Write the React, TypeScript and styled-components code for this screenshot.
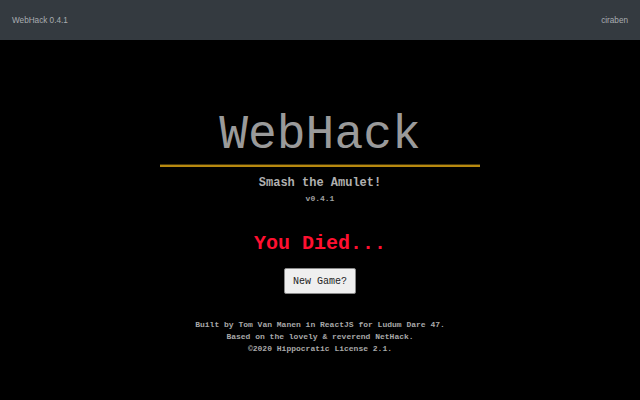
import React from "react";
import styled, { createGlobalStyle } from "styled-components";

const Global = createGlobalStyle`
  html, body { margin: 0; padding: 0; background: #000; }
  body { font-family: "Liberation Mono", "Courier New", monospace; }
`;

const Page = styled.div`
  width: 640px;
  height: 400px;
  background: #000;
  display: flex;
  flex-direction: column;
  overflow: hidden;
`;

const NavBar = styled.header`
  height: 40px;
  background: #343a40;
  display: flex;
  align-items: center;
  justify-content: space-between;
  padding: 0 12px;
  font-family: "Liberation Sans", Arial, sans-serif;
  font-size: 8.2px;
  color: #a9adb1;
`;

const Main = styled.main`
  display: flex;
  flex-direction: column;
  align-items: center;
  padding-top: 68px;
`;

const Title = styled.h1`
  margin: 0;
  font-family: "Liberation Mono", "Courier New", monospace;
  font-weight: normal;
  font-size: 48px;
  line-height: 54px;
  color: #9a9a9a;
`;

const Rule = styled.hr`
  width: 320px;
  margin: 2px 0 0;
  border: 0;
  border-top: 1px solid #4a3a0c;
  border-bottom: 2px solid #b8890f;
  height: 0;
`;

const Subtitle = styled.div`
  margin-top: 9px;
  font-size: 12px;
  font-weight: bold;
  line-height: 14px;
  color: #b0b0b0;
`;

const Version = styled.div`
  margin-top: 4px;
  font-size: 8px;
  font-weight: bold;
  line-height: 10px;
  color: #a0a0a0;
`;

const Died = styled.div`
  margin-top: 28px;
  font-size: 20px;
  font-weight: bold;
  line-height: 24px;
  color: #ff1030;
`;

const Button = styled.button`
  margin-top: 12px;
  height: 26px;
  padding: 0 8px;
  font-family: "Liberation Mono", "Courier New", monospace;
  font-size: 10px;
  color: #222;
  background: #efefef;
  border: 1px solid #8a8a8a;
  border-radius: 2px;
`;

const Footer = styled.div`
  margin-top: 25px;
  font-size: 8px;
  font-weight: bold;
  line-height: 12px;
  color: #a8a8a8;
  text-align: center;
`;

export default function App() {
  return (
    <Page>
      <Global />
      <NavBar>
        <span>WebHack 0.4.1</span>
        <span>ciraben</span>
      </NavBar>
      <Main>
        <Title>WebHack</Title>
        <Rule />
        <Subtitle>Smash the Amulet!</Subtitle>
        <Version>v0.4.1</Version>
        <Died>You Died...</Died>
        <Button>New Game?</Button>
        <Footer>
          Built by Tom Van Manen in ReactJS for Ludum Dare 47.
          <br />
          Based on the lovely &amp; reverend NetHack.
          <br />
          ©2020 Hippocratic License 2.1.
        </Footer>
      </Main>
    </Page>
  );
}
